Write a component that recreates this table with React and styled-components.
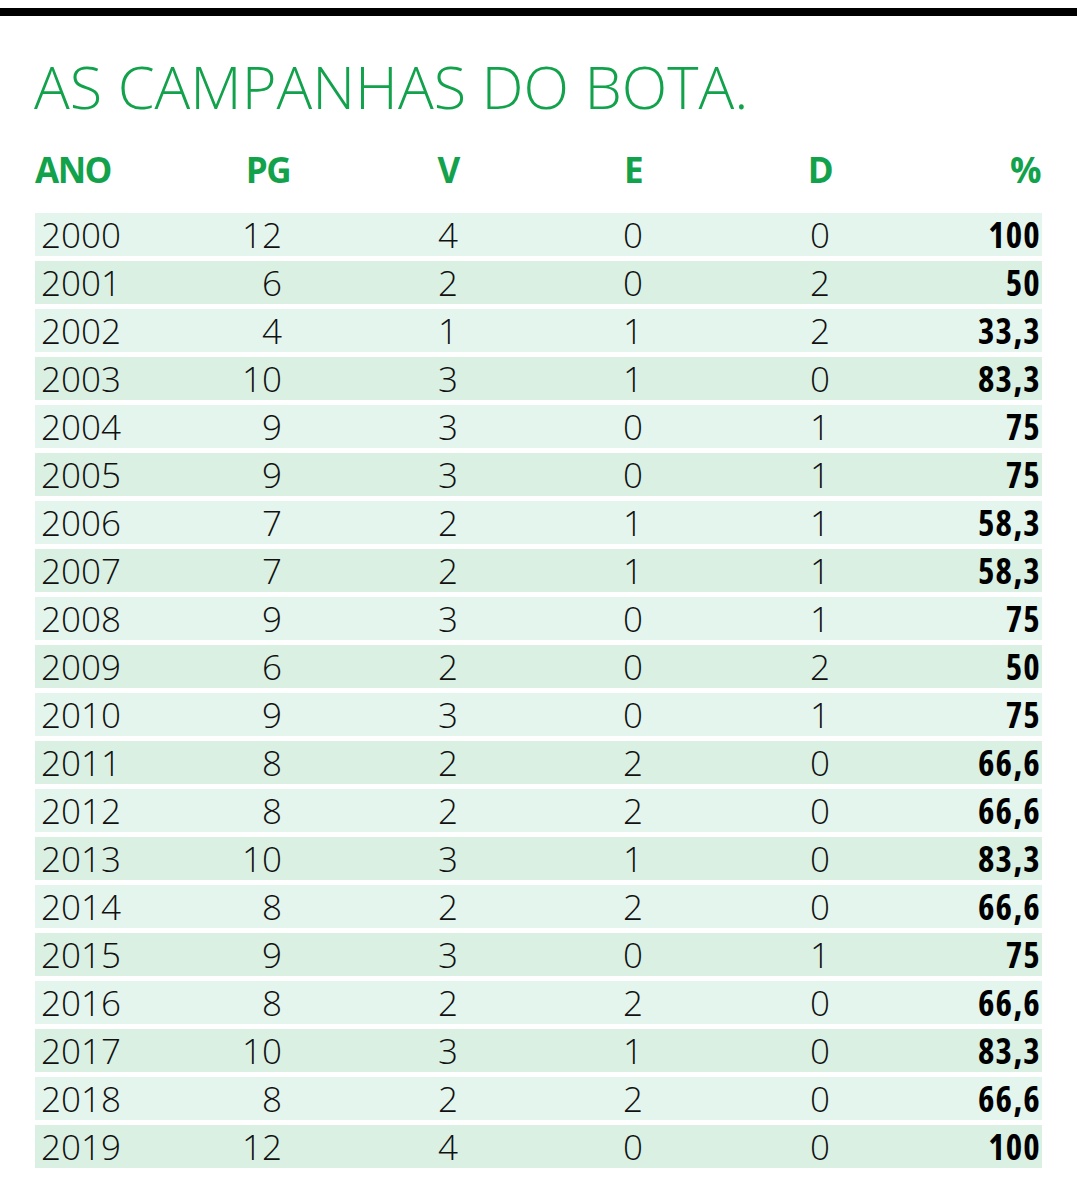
import React from "react";
import styled, { createGlobalStyle } from "styled-components";

const Global = createGlobalStyle`
  html, body { margin: 0; padding: 0; background: #fff; }
  body { font-family: "Open Sans", "Noto Sans", sans-serif; }
`;

const Page = styled.div`
  width: 1077px;
  padding-top: 8px;
`;

const TopBar = styled.div`
  height: 8px;
  background: #000;
`;

const Title = styled.h1`
  margin: 0;
  padding: 35px 0 0 34px;
  font-family: "Open Sans", sans-serif;
  font-weight: 300;
  font-size: 59.5px;
  line-height: 70px;
  color: #12a24c;
  letter-spacing: 0;
`;

const Table = styled.div`
  margin: 24px 0 0 35px;
  width: 1007px;
  display: flex;
  flex-direction: column;
  gap: 5px;
`;

const cols = "150px 168px 190px 180px 194px 1fr";

const HeadRow = styled.div`
  display: grid;
  grid-template-columns: ${cols};
  height: 48px;
  align-items: center;
  font-family: "Open Sans", sans-serif;
  font-weight: 700;
  font-size: 35px;
  letter-spacing: -1.5px;
  color: #12a24c;
  margin-bottom: 15px;
`;

const Row = styled.div`
  display: grid;
  grid-template-columns: ${cols};
  height: 43px;
  align-items: center;
  background: ${(p) => (p.$alt ? "#d9f0e3" : "#e3f5ec")};
  font-family: "Open Sans", sans-serif;
  font-weight: 300;
  font-size: 35px;
  color: #111;
`;

const Cell = styled.div`
  text-align: ${(p) => p.$align || "center"};
  padding-left: ${(p) => p.$pl || 0}px;
  padding-right: ${(p) => p.$pr || 0}px;
  line-height: 43px;
`;

const Pct = styled(Cell)`
  font-weight: 700;
  font-stretch: 85%;
  letter-spacing: 1.2px;
  color: #000;
`;

const data = [
  ["2000", 12, 4, 0, 0, "100"],
  ["2001", 6, 2, 0, 2, "50"],
  ["2002", 4, 1, 1, 2, "33,3"],
  ["2003", 10, 3, 1, 0, "83,3"],
  ["2004", 9, 3, 0, 1, "75"],
  ["2005", 9, 3, 0, 1, "75"],
  ["2006", 7, 2, 1, 1, "58,3"],
  ["2007", 7, 2, 1, 1, "58,3"],
  ["2008", 9, 3, 0, 1, "75"],
  ["2009", 6, 2, 0, 2, "50"],
  ["2010", 9, 3, 0, 1, "75"],
  ["2011", 8, 2, 2, 0, "66,6"],
  ["2012", 8, 2, 2, 0, "66,6"],
  ["2013", 10, 3, 1, 0, "83,3"],
  ["2014", 8, 2, 2, 0, "66,6"],
  ["2015", 9, 3, 0, 1, "75"],
  ["2016", 8, 2, 2, 0, "66,6"],
  ["2017", 10, 3, 1, 0, "83,3"],
  ["2018", 8, 2, 2, 0, "66,6"],
  ["2019", 12, 4, 0, 0, "100"],
];

export default function App() {
  return (
    <Page>
      <Global />
      <TopBar />
      <Title>AS CAMPANHAS DO BOTA.</Title>
      <Table>
        <HeadRow>
          <Cell $align="left">ANO</Cell>
          <Cell $align="right" $pr={63}>PG</Cell>
          <Cell>V</Cell>
          <Cell>E</Cell>
          <Cell>D</Cell>
          <Cell $align="right" $pr={2}>%</Cell>
        </HeadRow>
        {data.map((r, i) => (
          <Row key={r[0]} $alt={i % 2 === 1}>
            <Cell $align="left" $pl={6}>{r[0]}</Cell>
            <Cell $align="right" $pr={71}>{r[1]}</Cell>
            <Cell>{r[2]}</Cell>
            <Cell>{r[3]}</Cell>
            <Cell>{r[4]}</Cell>
            <Pct $align="right" $pr={1}>{r[5]}</Pct>
          </Row>
        ))}
      </Table>
    </Page>
  );
}
